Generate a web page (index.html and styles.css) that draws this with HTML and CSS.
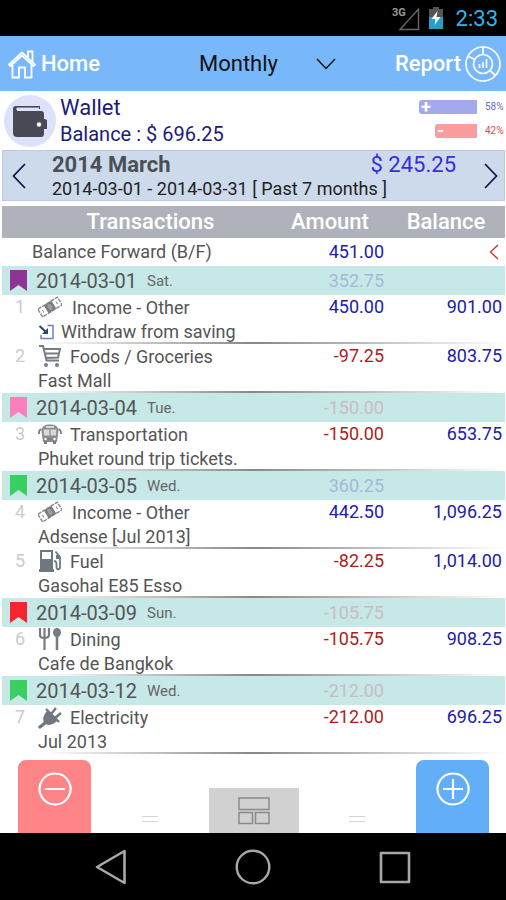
FILE: index.html
```
<!DOCTYPE html>
<html lang="en">
<head>
    <meta charset="UTF-8">
    <meta name="viewport" content="width=device-width, initial-scale=1.0">
    <title>Wallet - Monthly</title>
    <link rel="stylesheet" href="styles.css">
</head>
<body>
    <!-- shared icons -->
    <svg class="sprite" width="0" height="0" aria-hidden="true">
        <symbol id="flag" viewBox="0 0 17 21">
            <path d="M0 0h17v21l-8.500-6L0 21z"/>
        </symbol>
        <symbol id="cash" viewBox="0 0 24 24">
            <g transform="rotate(-32 12 12)" fill="none" stroke="#85888e" stroke-width="1.400">
                <path d="M0.500 7.500h23v9h-23z" stroke-dasharray="4 1"/>
                <path d="M7.500 7.500h9v9h-9z" fill="#777b82" stroke="none"/>
                <ellipse cx="12" cy="12" rx="2.200" ry="3.400" fill="#999ca3" stroke="none"/>
                <path d="M4 10.500v3M20 10.500v3" stroke-width="1"/>
            </g>
        </symbol>
        <symbol id="cart" viewBox="0 0 24 24">
            <path d="M1 2h4l3.500 14.500H21M5.500 5H22l-2 8.500L7.500 14M7 9.500h13.500" fill="none" stroke="#777b82" stroke-width="2"/>
            <circle cx="8" cy="21" r="2" fill="#777b82"/>
            <circle cx="19" cy="21" r="2" fill="#777b82"/>
        </symbol>
        <symbol id="bus" viewBox="0 0 24 24">
            <path d="M3.500 9c0-5 3.500-6.500 8.500-6.500S20.500 4 20.500 9l-1.500 11H5z" fill="#8a8c91"/>
            <path d="M5.500 7.500h13l-.5 6H6z" fill="#d8d9dc"/>
            <path d="M8 5h8" stroke="#fff" stroke-width="1.300"/>
            <path d="M12 7.500v6M9.500 17h5" stroke="#777b82"/>
            <circle cx="7.500" cy="17" r="1.200" fill="#fff"/>
            <circle cx="16.500" cy="17" r="1.200" fill="#fff"/>
            <path d="M6 19h3v3H6zM15 19h3v3h-3z" fill="#777b82"/>
            <path d="M3.500 7.500C1.500 7.500 1 8.500 1 12M20.500 7.500c2 0 2.500 1 2.500 4.500" fill="none" stroke="#777b82" stroke-width="1.800"/>
        </symbol>
        <symbol id="fuel" viewBox="0 0 24 24">
            <path d="M2 1h13v20H2zM1 20h15v3H1z" fill="#6f7780"/>
            <path d="M4 3h9v7H4z" fill="#fff"/>
            <path d="M16 12c3 0 2.500 3 2.500 6s3.500 3 3.500 0V8l-4.500-5.500" fill="none" stroke="#6f7780" stroke-width="1.800"/>
            <path d="M18 6h4v4h-4z" fill="#6f7780"/>
        </symbol>
        <symbol id="dining" viewBox="0 0 24 24">
            <path d="M2 1v7c0 2 1 3 4 3s5-1 5-3V1M6.500 1v22" fill="none" stroke="#777b82" stroke-width="2.200"/>
            <path d="M19 9v14" stroke="#777b82" stroke-width="2.600"/>
            <ellipse cx="19" cy="5.500" rx="4" ry="4.500" fill="#777b82"/>
        </symbol>
        <symbol id="plug" viewBox="0 0 24 24">
            <path d="M2 22l5-4" stroke="#6f7780" stroke-width="3.500" stroke-linecap="round"/>
            <path d="M9.500 5.500l10 10c-4 4-9 6-12.500 3s-1.500-9 2.500-13z" fill="#6f7780"/>
            <path d="M8 4l13 13M13.500 8.500L18 3M17.500 12.500L23 8" stroke="#6f7780" stroke-width="2.400"/>
        </symbol>
        <symbol id="transfer" viewBox="0 0 16 16">
            <path d="M9 1.500h5.500v13h-12V11" fill="none" stroke="#6c86bd" stroke-width="1.500"/>
            <path d="M1 2l6.500 6" stroke="#27457f" stroke-width="2"/>
            <path d="M9.500 4v6h-6z" fill="#27457f"/>
        </symbol>
        <symbol id="equals" viewBox="0 0 16 8">
            <path d="M0 1.500h16M0 6.500h16" stroke="#d4d4d4"/>
        </symbol>
    </svg>

    <div class="phone">
        <div class="status-bar">
            <svg class="signal" viewBox="0 0 28 26" aria-hidden="true">
                <path d="M8 24.500L26.500 4v20.500z" fill="none" stroke="#666" stroke-width="1.400"/>
                <text x="0" y="11">3G</text>
            </svg>
            <svg class="battery" viewBox="0 0 16 22" aria-hidden="true">
                <path d="M5 0h6v2h4v9H1V2h4z" fill="#555"/>
                <path d="M1 10h14v12H1z" fill="#259fc6"/>
                <path d="M9.500 4L3.500 12h4l-1 6 6-8h-4z" fill="#fff"/>
            </svg>
            <span class="clock">2:33</span>
        </div>

        <header class="app-bar">
            <a class="home" href="#home">
                <svg viewBox="0 0 30 30" aria-hidden="true">
                    <path d="M2 15.500L15 3.500l13 12-1.500 1.500L15 6.500 3.500 17zM21 8V2.500h4.500v10M5.500 16v12.500H12V18.500h6v10h6.500V16" fill="none" stroke="#fff" stroke-width="1.800"/>
                </svg>
                Home
            </a>
            <div class="range">
                <select aria-label="Report range">
                    <option>Monthly</option>
                    <option>Weekly</option>
                    <option>Daily</option>
                </select>
                <svg viewBox="0 0 20 12" aria-hidden="true">
                    <path d="M1 1l9 9.500L19 1" fill="none" stroke="#111" stroke-width="1.500"/>
                </svg>
            </div>
            <a class="report" href="#report">
                Report
                <svg viewBox="0 0 36 36" aria-hidden="true">
                    <g fill="none" stroke="#fff" stroke-width="1.700">
                        <circle cx="18" cy="18" r="17"/>
                        <circle cx="18" cy="18" r="9.500"/>
                        <path d="M18 1v7.500M3.500 10.500l6.500 3M25 24.500l5.500 5"/>
                        <path d="M14.500 22v-4M18 22v-6M21.500 22v-9"/>
                    </g>
                </svg>
            </a>
        </header>

        <section class="account">
            <div class="account-icon">
                <svg viewBox="0 0 36 32" aria-hidden="true">
                    <path d="M1 4c0-2 1-3 3-3h24v3H5v2h24c2 0 3 1 3 3v20c0 2-1 3-3 3H5c-2 0-4-1-4-4z" fill="#474a54"/>
                    <path d="M4.500 3.800H27" stroke="#dde1fa" stroke-width="2.400"/>
                    <path d="M25 14h8l2 1v9h-10c-3 0-4-2-4-5s1-5 4-5z" fill="#474a54"/>
                    <circle cx="27" cy="19.500" r="2.200" fill="#fff"/>
                </svg>
            </div>
            <div class="account-text">
                <h1>Wallet</h1>
                <p>Balance : $ 696.25</p>
            </div>
            <div class="ratios">
                <div class="ratio income">
                    <div class="track"><div class="bar" style="width: 58%"><span>+</span></div></div>
                    <span>58%</span>
                </div>
                <div class="ratio expense">
                    <div class="track"><div class="bar" style="width: 42%"><span>-</span></div></div>
                    <span>42%</span>
                </div>
            </div>
        </section>

        <section class="period">
            <button class="arrow" type="button" aria-label="Previous month">
                <svg viewBox="0 0 14 26"><path d="M13 1L1.500 13 13 25" fill="none" stroke="#15154a" stroke-width="1.800"/></svg>
            </button>
            <div class="period-text">
                <div class="period-title">
                    <h2>2014 March</h2>
                    <span>$ 245.25</span>
                </div>
                <p>2014-03-01 - 2014-03-31 [ Past 7 months ]</p>
            </div>
            <button class="arrow" type="button" aria-label="Next month">
                <svg viewBox="0 0 14 26"><path d="M1 1l11.500 12L1 25" fill="none" stroke="#15154a" stroke-width="1.800"/></svg>
            </button>
        </section>

        <main>
            <table>
                <colgroup>
                    <col class="col-no">
                    <col>
                    <col class="col-amount">
                    <col class="col-balance">
                </colgroup>
                <thead>
                    <tr>
                        <th class="head-name" colspan="2">Transactions</th>
                        <th>Amount</th>
                        <th>Balance</th>
                    </tr>
                </thead>
                <tbody>
                    <tr class="forward">
                        <td colspan="2">Balance Forward (B/F)</td>
                        <td class="num plus">451.00</td>
                        <td class="num">
                            <svg class="collapse" viewBox="0 0 10 16" aria-hidden="true"><path d="M9 1L1.500 8 9 15" fill="none" stroke="#d0392f" stroke-width="1.400"/></svg>
                        </td>
                    </tr>
                    <tr class="day">
                        <td colspan="2"><div class="date"><svg class="flag purple"><use href="#flag"/></svg>2014-03-01 <small>Sat.</small></div></td>
                        <td class="num faint-plus">352.75</td>
                        <td></td>
                    </tr>
                    <tr class="item">
                        <td class="no">1</td>
                        <td>
                            <div class="name wide"><svg class="icon"><use href="#cash"/></svg>Income - Other</div>
                            <div class="note"><svg class="transfer"><use href="#transfer"/></svg>Withdraw from saving</div>
                        </td>
                        <td class="num plus">450.00</td>
                        <td class="num plus">901.00</td>
                    </tr>
                    <tr class="item">
                        <td class="no">2</td>
                        <td>
                            <div class="name"><svg class="icon"><use href="#cart"/></svg>Foods / Groceries</div>
                            <div class="note">Fast Mall</div>
                        </td>
                        <td class="num minus">-97.25</td>
                        <td class="num plus">803.75</td>
                    </tr>
                    <tr class="day">
                        <td colspan="2"><div class="date"><svg class="flag pink"><use href="#flag"/></svg>2014-03-04 <small>Tue.</small></div></td>
                        <td class="num faint-minus">-150.00</td>
                        <td></td>
                    </tr>
                    <tr class="item">
                        <td class="no">3</td>
                        <td>
                            <div class="name"><svg class="icon"><use href="#bus"/></svg>Transportation</div>
                            <div class="note">Phuket round trip tickets.</div>
                        </td>
                        <td class="num minus">-150.00</td>
                        <td class="num plus">653.75</td>
                    </tr>
                    <tr class="day">
                        <td colspan="2"><div class="date"><svg class="flag green"><use href="#flag"/></svg>2014-03-05 <small>Wed.</small></div></td>
                        <td class="num faint-plus">360.25</td>
                        <td></td>
                    </tr>
                    <tr class="item">
                        <td class="no">4</td>
                        <td>
                            <div class="name wide"><svg class="icon"><use href="#cash"/></svg>Income - Other</div>
                            <div class="note">Adsense [Jul 2013]</div>
                        </td>
                        <td class="num plus">442.50</td>
                        <td class="num plus">1,096.25</td>
                    </tr>
                    <tr class="item">
                        <td class="no">5</td>
                        <td>
                            <div class="name"><svg class="icon"><use href="#fuel"/></svg>Fuel</div>
                            <div class="note">Gasohal E85 Esso</div>
                        </td>
                        <td class="num minus">-82.25</td>
                        <td class="num plus">1,014.00</td>
                    </tr>
                    <tr class="day">
                        <td colspan="2"><div class="date"><svg class="flag red"><use href="#flag"/></svg>2014-03-09 <small>Sun.</small></div></td>
                        <td class="num faint-minus">-105.75</td>
                        <td></td>
                    </tr>
                    <tr class="item">
                        <td class="no">6</td>
                        <td>
                            <div class="name"><svg class="icon"><use href="#dining"/></svg>Dining</div>
                            <div class="note">Cafe de Bangkok</div>
                        </td>
                        <td class="num minus">-105.75</td>
                        <td class="num plus">908.25</td>
                    </tr>
                    <tr class="day">
                        <td colspan="2"><div class="date"><svg class="flag green"><use href="#flag"/></svg>2014-03-12 <small>Wed.</small></div></td>
                        <td class="num faint-minus">-212.00</td>
                        <td></td>
                    </tr>
                    <tr class="item">
                        <td class="no">7</td>
                        <td>
                            <div class="name"><svg class="icon"><use href="#plug"/></svg>Electricity</div>
                            <div class="note">Jul 2013</div>
                        </td>
                        <td class="num minus">-212.00</td>
                        <td class="num plus">696.25</td>
                    </tr>
                </tbody>
            </table>
        </main>

        <footer class="actions">
            <button class="add expense-btn" type="button" aria-label="Add expense">
                <svg viewBox="0 0 34 34"><path d="M7 17h20M17 1.500a15.500 15.500 0 1 0 .1 0z" fill="none" stroke="#fff" stroke-width="2.200"/></svg>
            </button>
            <svg class="equals" aria-hidden="true"><use href="#equals"/></svg>
            <button class="layout-btn" type="button" aria-label="Layout">
                <svg viewBox="0 0 32 28"><path d="M1 1h30v11.500H1zM1 15.500h13.500v11H1zM17.500 15.500H31v11H17.500z" fill="none" stroke="#8a8a8a" stroke-width="1.500"/></svg>
            </button>
            <svg class="equals" aria-hidden="true"><use href="#equals"/></svg>
            <button class="add income-btn" type="button" aria-label="Add income">
                <svg viewBox="0 0 34 34"><path d="M7 17h20M17 7v20M17 1.500a15.500 15.500 0 1 0 .1 0z" fill="none" stroke="#fff" stroke-width="2.200"/></svg>
            </button>
        </footer>

        <nav class="nav-bar">
            <button type="button" aria-label="Back">
                <svg viewBox="0 0 36 36"><path d="M31.500 2v32L4 18z" fill="none" stroke="#a8a8a8" stroke-width="2.600" stroke-linejoin="round"/></svg>
            </button>
            <button type="button" aria-label="Home">
                <svg viewBox="0 0 36 36"><circle cx="18" cy="18" r="16.300" fill="none" stroke="#a8a8a8" stroke-width="2.400"/></svg>
            </button>
            <button type="button" aria-label="Recent apps">
                <svg viewBox="0 0 36 36"><path d="M4 4h28v29H4z" fill="none" stroke="#a8a8a8" stroke-width="2.600" stroke-linejoin="round"/></svg>
            </button>
        </nav>
    </div>
</body>
</html>
```
FILE: styles.css
```
* {
    box-sizing: border-box;
}

body {
    margin: 0;
    font-family: Roboto, "Liberation Sans", sans-serif;
    font-size: 18px;
    color: #555;
    background: #fff;
}

h1, h2, p {
    margin: 0;
    font-weight: 400;
}

button {
    padding: 0;
    border: none;
    background: none;
    cursor: pointer;
}

svg {
    display: block;
    flex: none;
}

.sprite {
    position: absolute;
}

.phone {
    min-height: 100vh;
    display: flex;
    flex-direction: column;
}

/* status bar */
.status-bar {
    height: 36px;
    padding-right: 8px;
    display: flex;
    align-items: center;
    justify-content: flex-end;
    gap: 8px;
    background: #000;
}

.signal {
    width: 28px;
    height: 26px;
}

.signal text {
    font-size: 11px;
    font-weight: 700;
    fill: #999;
}

.battery {
    width: 16px;
    height: 22px;
}

.clock {
    padding-left: 4px;
    font-size: 22px;
    color: #33b5e5;
}

/* app bar */
.app-bar {
    height: 55px;
    padding: 0 5px 0 7px;
    display: flex;
    align-items: center;
    background: #78b8fa;
    font-size: 22px;
}

.app-bar a {
    display: flex;
    align-items: center;
    gap: 4px;
    color: #fff;
    font-weight: 500;
    text-decoration: none;
}

.home {
    width: 192px;
}

.home svg {
    width: 30px;
    height: 30px;
}

.report {
    margin-left: auto;
}

.report svg {
    width: 36px;
    height: 36px;
}

.range {
    display: flex;
    align-items: center;
    gap: 38px;
}

.range select {
    appearance: none;
    padding: 0;
    border: none;
    background: none;
    font: inherit;
    color: #111;
}

.range svg {
    width: 20px;
    height: 12px;
}

/* account */
.account {
    height: 59px;
    padding: 4px 1px 0 4px;
    display: flex;
    gap: 4px;
    color: #1c1c78;
}

.account-icon {
    width: 52px;
    height: 52px;
    display: flex;
    align-items: center;
    justify-content: center;
    border-radius: 50%;
    background: #dde1fa;
}

.account-icon svg {
    width: 36px;
    height: 32px;
}

.account-text {
    flex: 1;
    font-size: 20px;
    line-height: 26px;
}

.account-text h1 {
    font-size: 22px;
}

.ratios {
    padding-top: 5px;
    display: flex;
    flex-direction: column;
    gap: 10px;
}

.ratio {
    display: flex;
    align-items: center;
    gap: 8px;
    font-size: 10px;
    line-height: 14px;
}

.ratio > span {
    width: 20px;
}

.track {
    width: 100px;
    display: flex;
    justify-content: flex-end;
}

.bar {
    height: 14px;
    padding-left: 2px;
    border-radius: 3px 0 0 3px;
    color: #fff;
    font-size: 18px;
    font-weight: 700;
    line-height: 14px;
}

.income {
    color: #6a6ad8;
}

.income .bar {
    background: #a5a8ec;
}

.expense {
    color: #e2475a;
}

.expense .bar {
    background: #fb9ca0;
}

/* period */
.period {
    height: 51px;
    margin: 0 1px 5px 2px;
    padding: 0 6px 0 9px;
    display: flex;
    align-items: center;
    background: #cddaeb;
    border: 1px solid #bccbe3;
}

.arrow svg {
    width: 14px;
    height: 26px;
}

.period-text {
    flex: 1;
    padding: 0 28px 0 26px;
}

.period-title {
    display: flex;
    justify-content: space-between;
    font-size: 22px;
    line-height: 26px;
}

.period-title h2 {
    font-size: 22px;
    font-weight: 700;
    color: #4b4f56;
}

.period-title span {
    color: #3a2cdc;
}

.period p {
    line-height: 22px;
    color: #222;
    white-space: nowrap;
}

/* transactions */
main {
    flex: 1;
    padding: 0 1px 0 2px;
}

table {
    width: 100%;
    table-layout: fixed;
    border-collapse: collapse;
}

.col-no {
    width: 36px;
}

.col-amount {
    width: 114px;
}

.col-balance {
    width: 118px;
}

th {
    height: 32px;
    padding: 0;
    background: #afb2ba;
    color: #fff;
    font-size: 22px;
    font-weight: 500;
    line-height: 32px;
}

.head-name {
    padding-left: 26px;
}

td {
    padding: 0;
    white-space: nowrap;
}

.num {
    padding-right: 3px;
    text-align: right;
}

.plus {
    color: #2020a8;
}

.minus {
    color: #b01c20;
}

.faint-plus {
    color: #a3b9de;
}

.faint-minus {
    color: #cbbcc4;
}

.forward td {
    height: 28px;
    line-height: 28px;
}

.forward td:first-child {
    padding-left: 30px;
}

.collapse {
    width: 10px;
    height: 16px;
    margin: 0 3px 0 auto;
}

.day {
    background: #c6e8e6;
}

.day td {
    height: 29px;
    line-height: 28px;
}

.date {
    padding-left: 8px;
    display: flex;
    align-items: center;
    font-size: 20px;
}

.date small {
    margin-left: 10px;
    font-size: 15px;
    color: #666;
}

.flag {
    width: 17px;
    height: 21px;
    margin-right: 9px;
}

.purple {
    fill: #8d3494;
}

.pink {
    fill: #fb7fba;
}

.green {
    fill: #38cf60;
}

.red {
    fill: #f5242e;
}

.item {
    background: linear-gradient(90deg, transparent 8%, #888 50%, transparent) bottom / 100% 2px no-repeat;
}

.item td {
    height: 49px;
    line-height: 23px;
    vertical-align: top;
}

.item .no {
    padding-right: 13px;
    text-align: right;
    color: #ccc;
}

.name {
    display: flex;
    align-items: center;
    gap: 8px;
}

.wide {
    gap: 10px;
}

.icon {
    width: 24px;
    height: 24px;
}

.note {
    display: flex;
    align-items: center;
    gap: 6px;
    line-height: 25px;
}

.transfer {
    width: 17px;
    height: 16px;
}

/* bottom actions */
.actions {
    padding: 0 17px 0 18px;
    display: flex;
    align-items: flex-end;
    justify-content: space-between;
}

.add {
    width: 73px;
    height: 73px;
    padding-top: 12px;
    display: flex;
    align-items: flex-start;
    justify-content: center;
    border-radius: 8px 8px 0 0;
}

.add svg {
    width: 34px;
    height: 34px;
}

.expense-btn {
    background: #fe8488;
}

.income-btn {
    background: #62aef9;
}

.equals {
    width: 16px;
    height: 8px;
    margin-bottom: 10px;
}

.layout-btn {
    width: 90px;
    height: 45px;
    display: flex;
    align-items: center;
    justify-content: center;
    background: #d1d1d1;
}

.layout-btn svg {
    width: 32px;
    height: 28px;
}

/* system navigation */
.nav-bar {
    height: 67px;
    display: flex;
    align-items: center;
    justify-content: center;
    gap: 106px;
    background: #000;
}

.nav-bar svg {
    width: 36px;
    height: 36px;
}
```
